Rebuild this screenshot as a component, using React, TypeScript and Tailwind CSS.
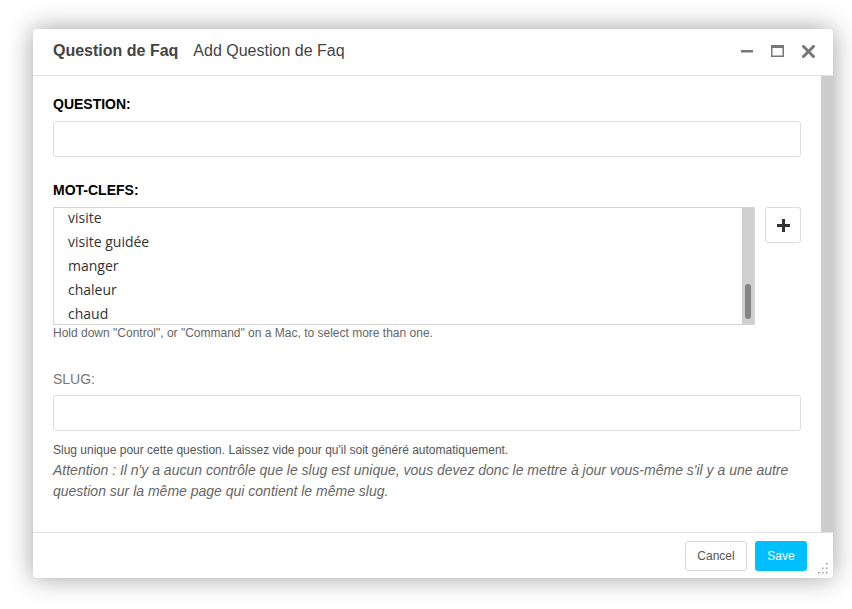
import React from 'react';

const keywords = ['visite', 'visite guidée', 'manger', 'chaleur', 'chaud'];

const HeaderIcons: React.FC = () => (
  <div className="flex items-center gap-[18px] text-[#777]">
    <svg width="12" height="12" viewBox="0 0 12 12">
      <rect x="0" y="5" width="12" height="2.5" fill="#777" />
    </svg>
    <svg width="13" height="12" viewBox="0 0 13 12">
      <rect x="0.75" y="0.75" width="11.5" height="10.5" fill="none" stroke="#777" strokeWidth="1.5" />
      <rect x="0" y="0" width="13" height="3" fill="#777" />
    </svg>
    <svg width="13" height="13" viewBox="0 0 13 13">
      <path d="M1.5 1.5 L11.5 11.5 M11.5 1.5 L1.5 11.5" stroke="#777" strokeWidth="3" strokeLinecap="square" />
    </svg>
  </div>
);

const App: React.FC = () => {
  return (
    <div className="w-full h-[609px] bg-white pt-[29px] pl-[33px] font-['Liberation_Sans',Arial,sans-serif]">
      <div className="relative w-[800px] h-[549px] bg-white rounded-[4px] shadow-[0_0_26px_rgba(0,0,0,0.38)] flex flex-col overflow-hidden">
        {/* header */}
        <div className="h-[47px] border-b border-[#e2e2e2] flex items-center pl-[20px] pr-[18px] pb-[2px] shrink-0">
          <div className="flex items-center gap-[15px] flex-1 text-[16px] text-[#444]">
            <span className="font-bold">Question de Faq</span>
            <span>Add Question de Faq</span>
          </div>
          <HeaderIcons />
        </div>

        {/* body */}
        <div className="h-[456px] flex shrink-0">
          <div className="flex-1 pl-[20px] pr-[20px] pt-[19px]">
            <label className="block text-[14px] leading-[18px] font-bold text-black">QUESTION:</label>
            <div className="mt-[8px] h-[36px] border border-[#dcdcdc] rounded-[3px]" />

            <label className="block mt-[24px] text-[14px] leading-[18px] font-bold text-black">MOT-CLEFS:</label>
            <div className="mt-[8px] flex gap-[10px]">
              <div className="flex-1 h-[118px] border border-[#d6d6d6] flex overflow-hidden">
                <div className="flex-1 -mt-[2px] pl-[14px] font-['Open_Sans',sans-serif] text-[14px] text-[#333]">
                  {keywords.map((k) => (
                    <div key={k} className="h-[24px] leading-[24px]">{k}</div>
                  ))}
                </div>
                <div className="w-[12px] bg-[#cfcfcf] flex flex-col justify-end items-center pb-[5px]">
                  <div className="w-[6px] h-[35px] rounded-full bg-[#858585]" />
                </div>
              </div>
              <button className="w-[36px] h-[36px] border border-[#dcdcdc] rounded-[3px] flex items-center justify-center bg-white">
                <svg width="13" height="13" viewBox="0 0 13 13">
                  <rect x="0" y="5" width="13" height="3" fill="#333" />
                  <rect x="5" y="0" width="3" height="13" fill="#333" />
                </svg>
              </button>
            </div>
            <p className="mt-[1px] text-[12px] leading-[14px] text-[#666]">
              Hold down "Control", or "Command" on a Mac, to select more than one.
            </p>

            <label className="block mt-[30px] text-[14px] leading-[18px] text-[#777]">SLUG:</label>
            <div className="mt-[7px] h-[36px] border border-[#dcdcdc] rounded-[3px]" />
            <p className="mt-[12px] text-[12px] leading-[14px] text-[#555]">
              Slug unique pour cette question. Laissez vide pour qu'il soit généré automatiquement.
            </p>
            <p className="mt-[3px] text-[14px] leading-[21px] italic text-[#666]">
              Attention : Il n'y a aucun contrôle que le slug est unique, vous devez donc le mettre à jour vous-même s'il y a une autre question sur la même page qui contient le même slug.
            </p>
          </div>
          <div className="w-[12px] bg-[#cdcdcd]" />
        </div>

        {/* footer */}
        <div className="flex-1 border-t border-[#e2e2e2] flex items-center justify-end gap-[8px] pr-[26px]">
          <button className="w-[62px] h-[30px] border border-[#d6d6d6] rounded-[3px] bg-white text-[12px] text-[#555]">
            Cancel
          </button>
          <button className="w-[52px] h-[30px] rounded-[3px] bg-[#00bfff] text-[12px] text-white">
            Save
          </button>
        </div>

        <svg className="absolute right-[4px] bottom-[4px]" width="12" height="11" viewBox="0 0 12 11">
          <g fill="#999">
            <rect x="9" y="0" width="1.5" height="1.5" />
            <rect x="5" y="4.5" width="1.5" height="1.5" />
            <rect x="9" y="4.5" width="1.5" height="1.5" />
            <rect x="1" y="9" width="1.5" height="1.5" />
            <rect x="5" y="9" width="1.5" height="1.5" />
            <rect x="9" y="9" width="1.5" height="1.5" />
          </g>
        </svg>
      </div>
    </div>
  );
};

export default App;
